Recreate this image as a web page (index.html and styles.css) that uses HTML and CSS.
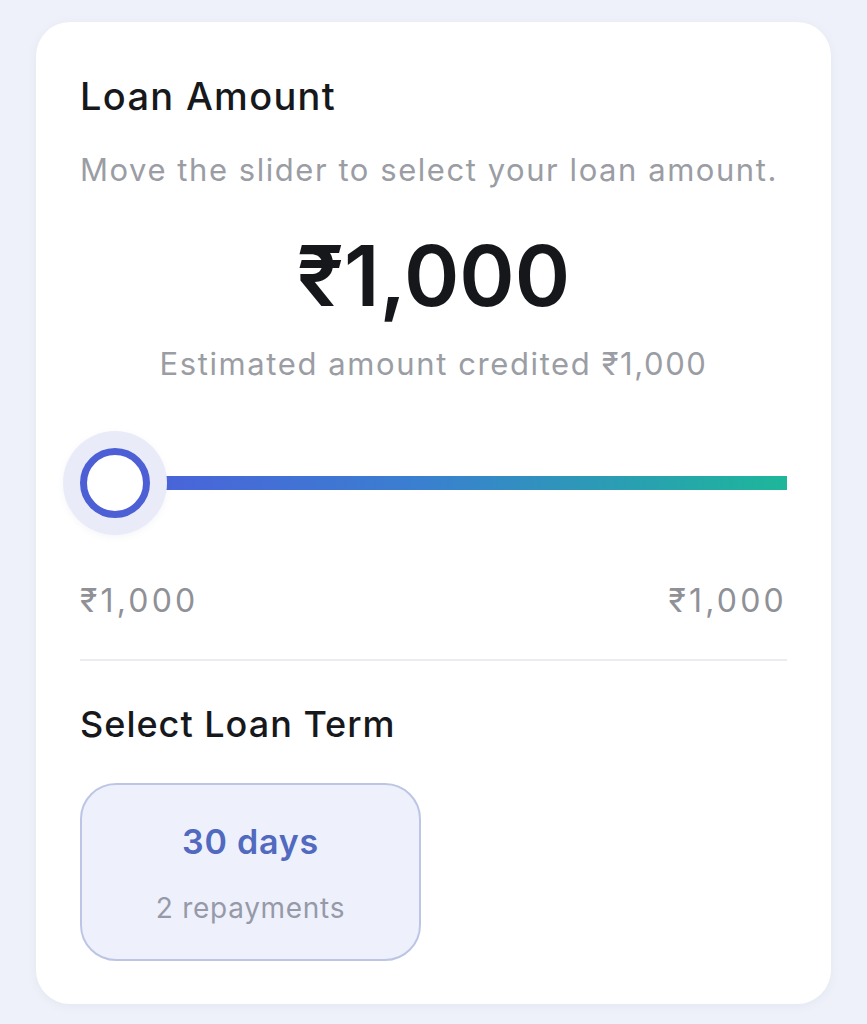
FILE: index.html
```html
<!DOCTYPE html>
<html>
<head>
<meta charset="utf-8">
<link rel="stylesheet" href="styles.css">
</head>
<body>
<div class="card">
  <h1 class="title">Loan Amount</h1>
  <p class="hint">Move the slider to select your loan amount.</p>
  <div class="amount">₹1,000</div>
  <p class="estimate">Estimated amount credited ₹1,000</p>
  <div class="slider">
    <div class="track"></div>
    <div class="halo"><div class="thumb"></div></div>
  </div>
  <div class="range">
    <span>₹1,000</span>
    <span>₹1,000</span>
  </div>
  <div class="divider"></div>
  <h2 class="subtitle">Select Loan Term</h2>
  <div class="terms">
    <div class="term">
      <div class="term-days">30 days</div>
      <div class="term-rep">2 repayments</div>
    </div>
  </div>
</div>
</body>
</html>
```

FILE: styles.css
```css
* { box-sizing: border-box; }
html, body { margin: 0; padding: 0; }
body {
  background: #eef1f9;
  font-family: Inter, "Noto Sans", sans-serif;
  width: 867px;
  height: 1024px;
  padding: 22px 36px 0 36px;
}
.card {
  background: #ffffff;
  border-radius: 34px;
  height: 982px;
  padding: 52px 44px 0 44px;
  box-shadow: 0 2px 10px rgba(120, 130, 170, 0.08);
}
.title {
  margin: 0;
  font-size: 38px;
  font-weight: 500;
  color: #17181c;
  line-height: 44px;
  letter-spacing: 1.3px;
}
.hint {
  margin: 32px 0 0 0;
  font-size: 31px;
  line-height: 40px;
  color: #9b9da4;
  letter-spacing: 1.55px;
  white-space: nowrap;
}
.amount {
  margin-top: 36px;
  text-align: center;
  font-size: 84px;
  font-weight: 600;
  line-height: 100px;
  color: #16171b;
  letter-spacing: 0px;
}
.estimate {
  margin: 18px 0 0 0;
  text-align: center;
  font-size: 31px;
  line-height: 40px;
  color: #9b9da4;
  letter-spacing: 1.6px;
  white-space: nowrap;
}
.slider {
  position: relative;
  height: 104px;
  margin-top: 47px;
  margin-left: -17px;
  display: flex;
  align-items: center;
}
.track {
  position: absolute;
  left: 52px;
  right: 0;
  top: 45px;
  height: 14px;
  background: linear-gradient(90deg, #4c5fdb 0%, #3a7fd0 45%, #1db79a 100%);
}
.halo {
  position: relative;
  width: 104px;
  height: 104px;
  border-radius: 50%;
  background: #e9ecf8;
  box-shadow: 0 2px 6px rgba(120, 130, 180, 0.08);
  display: flex;
  align-items: center;
  justify-content: center;
}
.thumb {
  width: 70px;
  height: 70px;
  border-radius: 50%;
  background: #ffffff;
  border: 7px solid #4c5fd5;
}
.range {
  display: flex;
  justify-content: space-between;
  margin-top: 46px;
  font-size: 32px;
  line-height: 40px;
  color: #8f9197;
  letter-spacing: 3.2px;
}
.divider {
  height: 2px;
  background: #ebecf0;
  margin-top: 38px;
}
.subtitle {
  margin: 41px 0 0 0;
  font-size: 36px;
  font-weight: 500;
  line-height: 44px;
  color: #17181c;
  letter-spacing: 1px;
}
.terms {
  display: flex;
  margin-top: 37px;
}
.term {
  width: 341px;
  height: 178px;
  border-radius: 36px;
  background: #eef1fc;
  border: 2px solid #bcc6e4;
  display: flex;
  flex-direction: column;
  align-items: center;
  justify-content: center;
}
.term-days {
  font-size: 34px;
  font-weight: 600;
  color: #5169bf;
  line-height: 44px;
  margin-top: 2px;
  letter-spacing: 0.8px;
}
.term-rep {
  font-size: 28px;
  color: #969aa8;
  line-height: 36px;
  margin-top: 26px;
  letter-spacing: 0.7px;
}
```
